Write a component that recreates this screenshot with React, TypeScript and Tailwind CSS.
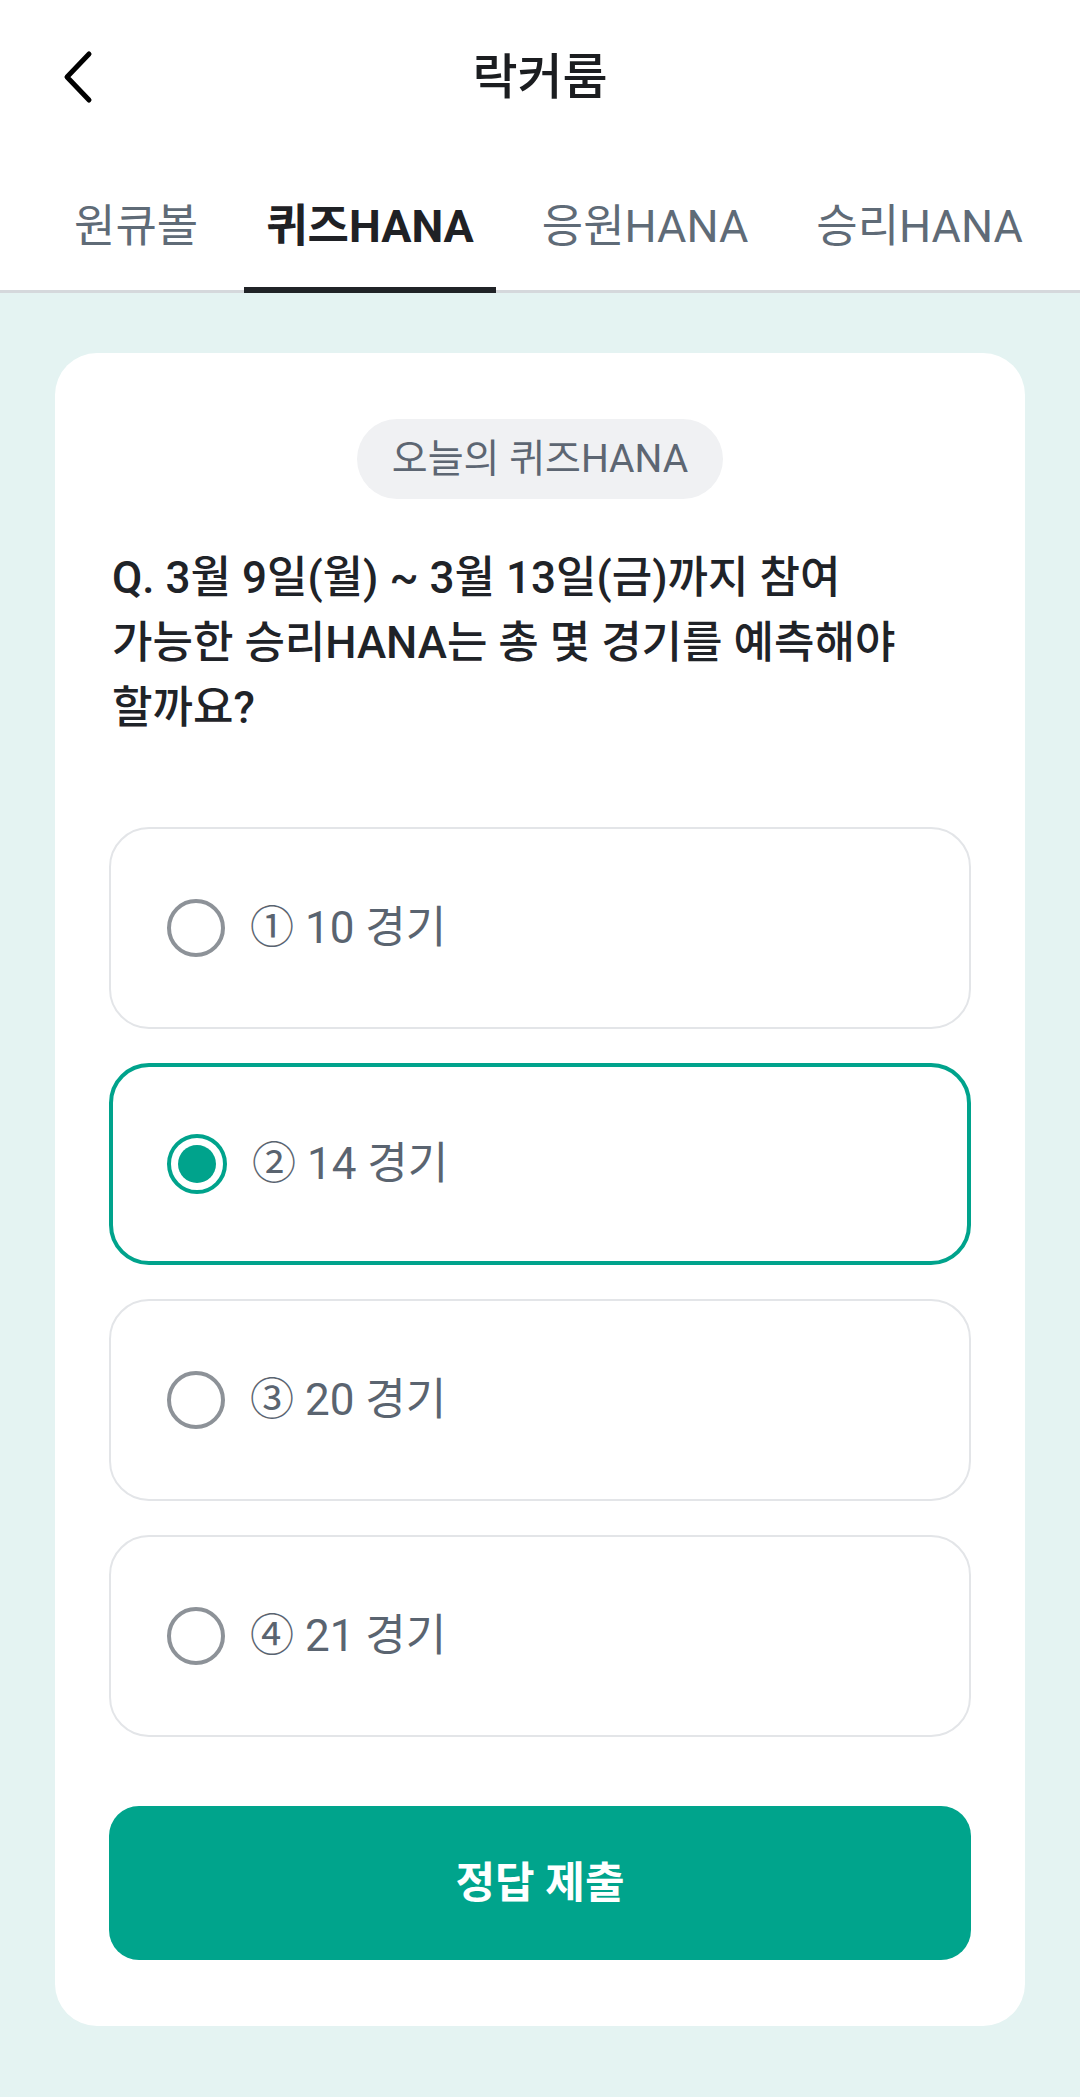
import React from 'react';

type Option = { no: string; label: string };

const options: Option[] = [
  { no: '①', label: '10 경기' },
  { no: '②', label: '14 경기' },
  { no: '③', label: '20 경기' },
  { no: '④', label: '21 경기' }];

const tabs = ['원큐볼', '퀴즈HANA', '응원HANA', '승리HANA'];

export default function App() {
  const selected = 1;
  const activeTab = 1;
  return (
    <div className="w-[1080px] min-h-[2097px] bg-[#e4f3f2] font-[Roboto,'Noto_Sans_CJK_KR',sans-serif]">
      {/* top bar */}
      <div className="bg-white">
        <div className="grid grid-cols-[1fr_auto_1fr] items-center h-[154px]">
          <div className="pl-[60px] flex items-center">
            <svg width="36" height="58" viewBox="0 0 36 58" fill="none">
              <path
                d="M29 6 L7 29 L29 52"
                stroke="#000"
                strokeWidth="5"
                strokeLinecap="round"
                strokeLinejoin="round" />
            </svg>
          </div>
          <h1 className="text-[49px] font-medium text-[#1b1d20] leading-none">락커룸</h1>
          <div />
        </div>

        {/* tabs */}
        <div className="flex gap-[24px] pl-[52px] border-b-[3px] border-[#d5d8dc]">
          {tabs.map((t, i) =>
          <div
            key={t}
            className={
            i === activeTab ?
            'px-[22px] pt-[48px] pb-[35px] -mb-[3px] border-b-[6px] border-[#202327] text-[45px] leading-[50px] font-bold text-[#1f2125]' :
            'px-[22px] pt-[48px] pb-[35px] -mb-[3px] border-b-[6px] border-transparent text-[45px] leading-[50px] text-[#5f6b77]'
            }>
            
              {t}
            </div>
          )}
        </div>
      </div>

      {/* content */}
      <div className="px-[55px] pt-[60px]">
        <div className="bg-white rounded-[42px] px-[54px] pt-[66px] pb-[66px]">
          <div className="flex justify-center">
            <span className="h-[80px] px-[35px] rounded-full bg-[#f0f1f3] text-[39px] text-[#5d6672] flex items-center">
              오늘의 퀴즈HANA
            </span>
          </div>

          <p className="mt-[47px] pl-[3px] text-[44px] leading-[65px] font-medium text-[#1f2328]">
            Q. 3월 9일(월) ~ 3월 13일(금)까지 참여
            <br />
            가능한 승리HANA는 총 몇 경기를 예측해야
            <br />
            할까요?
          </p>

          <div className="mt-[86px] flex flex-col gap-[34px]">
            {options.map((o, i) =>
            <div
              key={o.no}
              className={
              i === selected ?
              'h-[202px] rounded-[40px] border-[4px] border-[#00a38c] flex items-center pl-[54px] gap-[25px]' :
              'h-[202px] rounded-[40px] border-2 border-[#e3e5e8] flex items-center pl-[56px] gap-[25px]'
              }>
              
                {i === selected ?
              <span className="w-[60px] h-[60px] rounded-full border-[4px] border-[#00a38c] flex items-center justify-center">
                    <span className="w-[38px] h-[38px] rounded-full bg-[#00a38c]" />
                  </span> :

              <span className="w-[58px] h-[58px] rounded-full border-[4px] border-[#8d9298]" />
              }
                <span className="text-[44px] text-[#5a6470] leading-none">
                  {o.no} {o.label}
                </span>
              </div>
            )}
          </div>

          <button className="mt-[69px] w-full h-[154px] rounded-[30px] bg-[#00a48c] text-white text-[43px] font-bold">
            정답 제출
          </button>
        </div>
      </div>
    </div>);

}
